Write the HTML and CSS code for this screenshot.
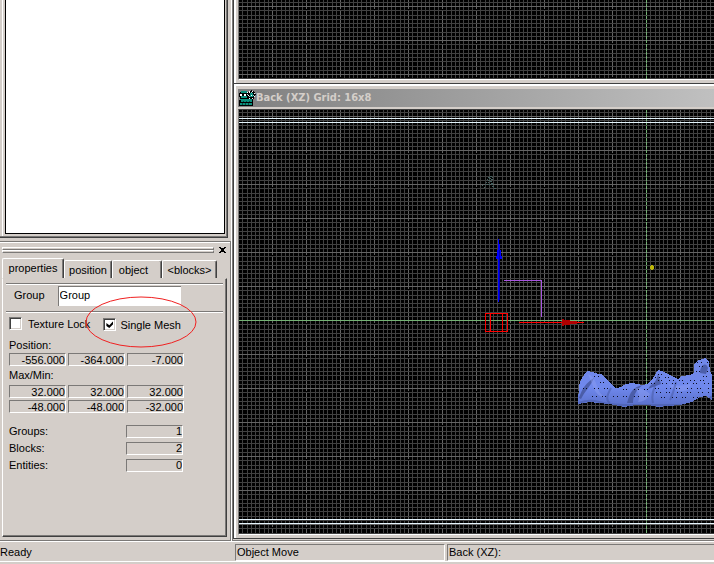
FILE: index.html
```
<!DOCTYPE html>
<html lang="en">
<head>
<meta charset="utf-8">
<title>Level editor</title>
<link rel="stylesheet" href="styles.css">
</head>
<body>
<main class="workspace">
  <aside class="sidebar">
    <section class="browser"><div class="browser-list"></div></section>
    <section class="dock">
      <header class="dock-head">
        <div class="grip"><i></i><i></i></div>
        <button class="dock-close" type="button" aria-label="Close">
          <svg width="7" height="6" viewBox="0 0 7 6" shape-rendering="crispEdges"><path d="M0 0h2v1h3V0h2v1H6v1H5v2h1v1h1v1H5V5H2v1H0V5h1V4h1V2H1V1H0z"/></svg>
        </button>
      </header>
      <nav class="tabs" role="tablist">
        <button class="tab tab-active" type="button" role="tab" aria-selected="true">properties</button>
        <button class="tab tab-position" type="button" role="tab">position</button>
        <button class="tab tab-object" type="button" role="tab">object</button>
        <button class="tab tab-blocks" type="button" role="tab">&lt;blocks&gt;</button>
      </nav>
      <form class="props">
        <div class="group-row">
          <label for="group">Group</label>
          <input id="group" class="group-name" type="text" value="Group">
        </div>
        <div class="checks">
          <label class="check"><input type="checkbox">Texture Lock</label>
          <label class="check check-mesh"><input type="checkbox" checked>Single Mesh</label>
          <svg class="callout" width="114" height="54" viewBox="0 0 114 54"><ellipse cx="57" cy="27" rx="55" ry="25"/></svg>
        </div>
        <div class="stats">
          <label class="caption" id="pos" for="px">Position:</label>
          <input id="px" class="cell" readonly value="-556.000">
          <input class="cell" aria-labelledby="pos" readonly value="-364.000">
          <input class="cell" aria-labelledby="pos" readonly value="-7.000">
          <label class="caption" id="mm" for="mx">Max/Min:</label>
          <input id="mx" class="cell" readonly value="32.000">
          <input class="cell" aria-labelledby="mm" readonly value="32.000">
          <input class="cell" aria-labelledby="mm" readonly value="32.000">
          <input class="cell" aria-labelledby="mm" readonly value="-48.000">
          <input class="cell" aria-labelledby="mm" readonly value="-48.000">
          <input class="cell" aria-labelledby="mm" readonly value="-32.000">
        </div>
        <div class="counts">
          <label for="groups">Groups:</label><input id="groups" class="cell" readonly value="1">
          <label for="blocks">Blocks:</label><input id="blocks" class="cell" readonly value="2">
          <label for="entities">Entities:</label><input id="entities" class="cell" readonly value="0">
        </div>
      </form>
    </section>
  </aside>

  <div class="views">
    <section class="view view-top">
      <svg class="canvas" shape-rendering="crispEdges">
        <defs>
          <pattern id="grid" width="34" height="34" patternUnits="userSpaceOnUse">
            <path class="minor" d="M4 0h1v34h-1zM9 0h1v34h-1zM13 0h1v34h-1zM17 0h1v34h-1zM21 0h1v34h-1zM26 0h1v34h-1zM30 0h1v34h-1zM0 4h34v1H0zM0 9h34v1H0zM0 13h34v1H0zM0 17h34v1H0zM0 21h34v1H0zM0 26h34v1H0zM0 30h34v1H0z"/>
            <path class="major" d="M0 0h34v1H0zM0 0h1v3H0zM0 5h1v4H0zM0 10h1v3H0zM0 14h1v3H0zM0 18h1v3H0zM0 22h1v4H0zM0 27h1v3H0zM0 31h1v3H0z"/>
          </pattern>
          <pattern id="grid-top" href="#grid" patternTransform="translate(33 6)"/>
          <pattern id="axis-dash" width="1" height="4" patternUnits="userSpaceOnUse"><path class="axis" d="M0 0h1v3H0z"/></pattern>
        </defs>
        <rect width="100%" height="100%" fill="url(#grid-top)"/>
        <rect x="407" width="1" height="100%" fill="url(#axis-dash)"/>
      </svg>
    </section>
    <section class="view view-back">
      <header class="title">
        <svg width="17" height="16" viewBox="0 0 17 16" shape-rendering="crispEdges">
          <path fill="#000" d="M1 2h7v1h1V2h1V1h2V0h1v1h2v1h1v2h1v1h-1v2h-1v2h-1v7H0v-6h1V7H0V3h1z"/>
          <path fill="#0b8f7c" d="M2 1h6v2H2zM2 6h6v2H2zM1 9h12v1H1zM2 10h11v2H2zM1 13h12v2H1zM11 3h3v4h-3z"/>
          <path fill="#034b41" d="M3 13h1v2H3zM6 13h1v2H6zM9 13h1v2H9zM4 11h1v1H4zM7 11h1v1H7zM10 11h1v1h-1z"/>
          <path fill="#fff" d="M1 4h2v2H1zM5 4h2v2H5zM8 2h1v1H8zM10 1h1v2h-1zM13 1h1v1h-1zM15 3h1v1h-1zM9 5h1v1H9zM15 6h1v1h-1zM10 8h1v1h-1zM13 8h1v1h-1zM12 5h1v1h-1z"/>
          <path fill="#9dd" d="M12 2h1v1h-1zM14 5h1v1h-1zM10 6h1v1h-1zM8 4h1v1H8z"/>
        </svg>
        <h1>Back (XZ) Grid: 16x8</h1>
      </header>
      <svg class="canvas" shape-rendering="crispEdges">
        <defs>
          <pattern id="grid-back" href="#grid" patternTransform="translate(33 6)"/>
          <linearGradient id="rock" x1="0" y1="0" x2="0" y2="1">
            <stop offset="0" stop-color="#7288e8"/><stop offset=".6" stop-color="#6f88ed"/><stop offset="1" stop-color="#596fc8"/>
          </linearGradient>
          <clipPath id="rock-clip"><use href="#rock-shape"/></clipPath>
        </defs>
        <rect width="100%" height="100%" fill="url(#grid-back)"/>
        <rect x="407" width="1" height="100%" fill="url(#axis-dash)"/>
        <rect class="axis" y="210" width="100%" height="1"/>
        <g class="bounds">
          <rect y="8" width="100%" height="1"/><rect y="12" width="100%" height="1"/>
          <rect y="409" width="100%" height="1"/><rect y="413" width="100%" height="1"/>
        </g>
        <g transform="translate(-239 -110)">
          <path fill="#46605f" d="M490 176h2v1h-2zM488 177h2v1h-2zM492 177h1v1h-1zM487 179h1v1h-1zM489 178h2v1h-2zM491 179h2v1h-2zM488 180h2v1h-2zM486 182h1v1h-1zM488 182h1v1h-1zM490 181h2v1h-2zM485 184h2v1h-2zM482 185h1v1h-1zM488 184h2v1h-2zM491 183h2v2h-2zM492 186h2v1h-2zM494 188h2v1h-2zM484 187h1v1h-1z"/>
          <path fill="#a855e0" d="M504 280h38v37h-1v-36h-37z"/>
          <path fill="#00f" d="M498 258h1v44h-1zM498 239h1v5h1v6h1v6h1v3h-6v-3h1v-6h1z"/>
          <path fill="#0000b4" d="M499 258h1v42h-1zM499 250h1v9h-1z"/>
          <path fill="#f00" d="M485 313h23v1h-23zM485 331h23v1h-23zM485 313h1v19h-1zM507 313h1v19h-1zM490 313h1v19h-1zM502 313h1v19h-1z"/>
          <path fill="#f00" d="M519 322h44v1h-44zM577 322h7v1h-7z"/>
          <path fill="#b00000" d="M562 319h2v1h6v1h7v3h-7v1h-6v1h-2z"/>
          <path fill="#bdb70b" d="M651 265h2v1h1v3h-1v1h-2v-1h-1v-3h1z"/>
          <path id="rock-shape" fill="url(#rock)" d="M578 404 579 385 582 378 587 371 593 372 598 374 601 374 606 379 612 385 616 388 621 387 626 384 632 383 642 385 648 384 653 378 658 370 664 372 672 376 678 379 682 376 690 375 694 373 694 364 699 360 705 358 709 362 710 371 712 375V400L706 396 700 397 692 402 680 405 668 406 658 407 648 405 636 405 624 407 610 404 598 403 590 402z"/>
          <g clip-path="url(#rock-clip)" shape-rendering="auto">
            <path fill="#3f4f90" d="M579 398c3-10 8-16 15-20-4 9-9 13-13 21zM627 403c3-10 5-16 16-18-8 5-10 13-10 18zM700 373c0-8 6-12 8-5l-2 6zM648 389c5-8 7-3 10-15l3 10z" opacity=".7"/>
            <path fill="#8ea0f2" d="M588 374q6 2 9 12t10 12q-11-1-14-12zM635 388q9 0 15 6-4 8-12 8 3-7-3-14zM668 384q12 4 24-1l-4 7q-12 4-20-6z" opacity=".45"/>
            <path fill="none" stroke="#4658a0" stroke-width="2" opacity=".5" d="M579 403q10-4 20-1t25 3 30 0 33 0 25-9M611 388q-7 12-1 15M655 386q-4 9-2 17M676 382q-3 12-6 18"/>
          </g>
          <g class="holes">
            <path d="M594 376.500h14"/><path d="M595 382.500h18"/><path d="M582 388.500h30"/><path d="M618 389.500h34"/><path d="M592 396.500h60"/>
            <path d="M657 374.500h10"/><path d="M655 377.500h20"/><path d="M653 380.500h55"/><path d="M650 383.500h61"/><path d="M650 388.500h61"/><path d="M656 392.500h54"/><path d="M660 397.500h45"/>
            <path d="M697 362.500h12"/><path d="M694 366.500h16"/><path d="M695 371.500h15"/><path d="M698 376.500h14"/>
          </g>
        </g>
      </svg>
    </section>
  </div>
</main>
<footer class="status">
  <span class="ready">Ready</span>
  <span class="pane pane-mode">Object Move</span>
  <span class="pane pane-view">Back (XZ):</span>
</footer>
</body>
</html>
```
FILE: styles.css
```
:root {
  --face: #d4cec9;
  --shade: #7b7977;
  --dark: #404040;
  --light: #fff;
}
* { box-sizing: border-box; }
body {
  margin: 0;
  min-height: 100vh;
  display: flex;
  flex-direction: column;
  background: var(--face);
  color: #000;
  font: 11px/14px "Liberation Sans", sans-serif;
}
input, button { font: inherit; color: inherit; margin: 0; padding: 0; border-radius: 0; }
.workspace { flex: 1; display: flex; }
.sidebar {
  flex: none;
  width: 232px;
  display: flex;
  flex-direction: column;
  border-right: 1px solid var(--light);
}
.browser {
  height: 238px;
  padding: 0 2px 2px 3px;
  margin-right: 3px;
  border-right: 1px solid var(--dark);
  border-bottom: 1px solid var(--dark);
  box-shadow: inset -1px -1px var(--shade), inset 2px 0 var(--face), inset 3px 0 var(--light);
}
.browser-list {
  height: 234px;
  margin: 0 0 0 2px;
  background: #fff;
  border: 1px solid #000;
  border-top: 0;
}
.dock {
  flex: 1;
  display: flex;
  flex-direction: column;
  margin-top: 3px;
  padding: 0 3px 3px 2px;
  border-top: 1px solid var(--shade);
  border-bottom: 1px solid var(--shade);
  border-right: 1px solid var(--shade);
  box-shadow: inset 0 1px var(--light);
}
.dock-head { display: flex; align-items: center; gap: 5px; height: 16px; }
.grip { flex: 1; display: grid; gap: 0; }
.grip i {
  height: 3px;
  border: 1px solid var(--light);
  border-right-color: var(--shade);
  border-bottom-color: var(--shade);
}
.dock-close { display: flex; width: 8px; background: none; border: 0; }
.tabs { display: flex; align-items: flex-end; height: 20px; }
.tab {
  height: 18px;
  background: var(--face);
  border: 1px solid var(--light);
  border-bottom: 0;
  border-right: 1px solid var(--dark);
  box-shadow: inset -1px 0 var(--shade);
  border-radius: 2px 2px 0 0;
  white-space: nowrap;
}
.tab-active { width: 62px; height: 20px; padding-bottom: 2px; }
.tab-position { width: 48px; }
.tab-object { width: 50px; padding-right: 7px; }
.tab-blocks { width: 55px; }
.props {
  flex: 1;
  padding: 4px 3px 0;
  border: 1px solid var(--light);
  border-top-color: var(--face);
  border-right-color: var(--dark);
  border-bottom-color: var(--dark);
  box-shadow: inset -1px -1px var(--shade);
}
.group-row {
  display: flex;
  gap: 13px;
  height: 29px;
  padding: 2px 0 0 8px;
  border-top: 1px solid var(--shade);
  border-bottom: 1px solid var(--shade);
  box-shadow: inset 0 1px var(--light), 0 1px var(--light);
  line-height: 18px;
}
.group-name {
  width: 123px;
  height: 20px;
  padding: 0 0 4px 1px;
  background: #fff;
  border: 0;
  border-top: 1px solid var(--shade);
  border-left: 1px solid var(--shade);
}
.checks { position: relative; display: flex; padding: 5px 0 0 3px; gap: 13px; height: 26px; }
.check { display: flex; align-items: flex-start; gap: 6px; white-space: nowrap; }
.check-mesh { padding-top: 1px; gap: 4px; }
.check input {
  appearance: none;
  width: 13px;
  height: 13px;
  background: #fff;
  border: 1px solid var(--light);
  border-top-color: var(--shade);
  border-left-color: var(--shade);
  box-shadow: inset 1px 1px var(--dark), inset -1px -1px var(--face);
}
.check input:checked::before {
  content: "";
  display: block;
  width: 7px;
  height: 7px;
  margin: 2px;
  background: #000;
  clip-path: polygon(0 28%, 42% 62%, 100% 0, 100% 42%, 42% 100%, 0 70%);
}
.callout { position: absolute; left: 78px; top: -17px; pointer-events: none; }
.callout ellipse { fill: none; stroke: #f02020; stroke-width: 1; }
.stats { display: grid; grid-template-columns: repeat(3, 57px); gap: 2px; padding-left: 3px; }
.caption { grid-column: 1 / -1; height: 13px; }
.stats .caption:not(:first-child) { height: 15px; }
.cell {
  width: 57px;
  height: 13px;
  background: none;
  border: 1px solid var(--light);
  border-top-color: var(--shade);
  border-left-color: var(--shade);
  text-align: right;
  line-height: 11px;
}
.counts {
  display: grid;
  grid-template-columns: 117px 57px;
  grid-auto-rows: 14px;
  row-gap: 3px;
  align-items: center;
  padding: 11px 0 0 3px;
}
.views {
  flex: 1;
  min-width: 0;
  display: flex;
  flex-direction: column;
  padding-bottom: 1px;
  border-left: 1px solid var(--shade);
  border-bottom: 1px solid var(--shade);
}
.view {
  display: flex;
  flex-direction: column;
  padding-left: 4px;
  border-left: 1px solid var(--dark);
  box-shadow: inset 2px 0 var(--light);
}
.canvas {
  display: block;
  flex: 1 1 0;
  min-height: 0;
  width: 100%;
  background: #000;
  border-left: 1px solid var(--shade);
  border-bottom: 1px solid var(--light);
}
.view-top { height: 84px; padding-bottom: 3px; border-bottom: 1px solid var(--dark); }
.view-back { flex: 1; padding-top: 5px; padding-bottom: 3px; border-bottom: 1px solid var(--dark); box-shadow: inset 2px 2px var(--light); }
.title {
  display: flex;
  align-items: center;
  gap: 0;
  height: 18px;
  margin-bottom: 2px;
  padding-left: 1px;
  background: linear-gradient(90deg, #808080, #c0c0c0);
}
.title h1 { margin: 0; font: bold 11px/14px "DejaVu Sans Condensed", "Liberation Sans", sans-serif; color: var(--face); }
.view-back .canvas { border-top: 1px solid var(--dark); }
.minor { fill: #414141; }
.major { fill: #646464; }
.axis { fill: #74b274; }
.bounds { fill: #e4f4fc; }
.holes { stroke: #0a0d22; fill: none; stroke-dasharray: 1 3 1 5 1 2 1 7; }
.holes path:nth-child(2n) { stroke-dashoffset: 5; }
.holes path:nth-child(3n) { stroke-dashoffset: 9; }
.status {
  display: flex;
  height: 23px;
  padding: 2px 0;
  border-top: 1px solid var(--light);
  box-shadow: inset 0 -2px var(--face), inset 0 -3px var(--light);
  font-size: 11px;
  line-height: 15px;
}
.ready { width: 235px; padding-top: 1px; }
.pane {
  height: 17px;
  padding-left: 1px;
  border: 1px solid var(--light);
  border-top-color: var(--shade);
  border-left-color: var(--shade);
}
.pane-mode { width: 210px; margin-right: 2px; }
.pane-view { flex: 1; border-right: 0; }
```
